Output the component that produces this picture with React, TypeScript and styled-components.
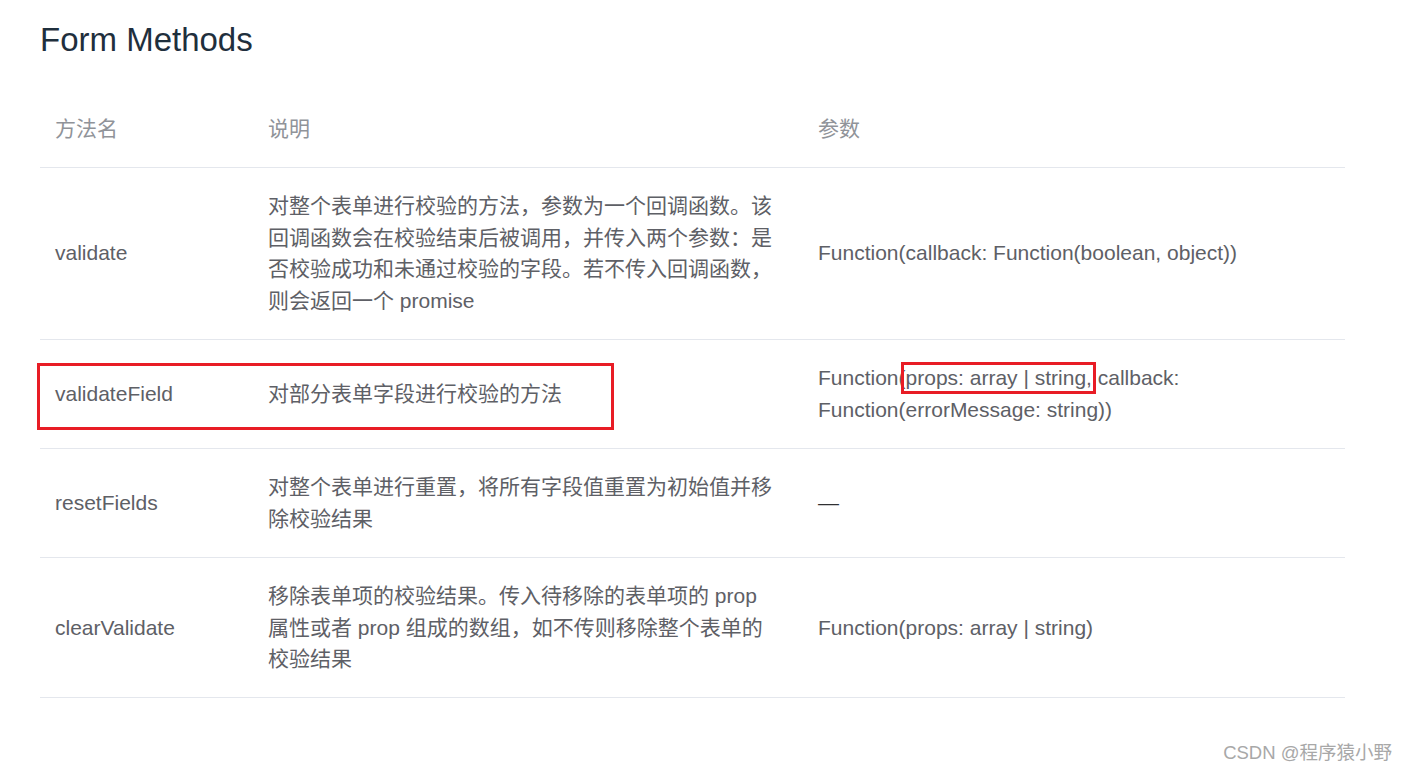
import { FC, ReactElement, ReactNode } from 'react';
import styled, { createGlobalStyle } from 'styled-components';

const GlobalStyle = createGlobalStyle`
    html, body {
        margin: 0;
        padding: 0;
        background: #fff;
    }
    body {
        font-family: "Liberation Sans", Arial, "Noto Sans CJK SC", sans-serif;
    }
`;

const PageWrapper = styled.div`
    position: relative;
    width: 1406px;
    height: 774px;
    padding: 20px 40px 0;
    box-sizing: border-box;
    overflow: hidden;
`;

const Title = styled.h3`
    margin: 0 0 30px;
    font-size: 33px;
    line-height: 40px;
    font-weight: 400;
    color: #1f2f3d;
`;

const Table = styled.table`
    width: 1305px;
    table-layout: fixed;
    border-collapse: collapse;
    font-size: 21px;
    line-height: 31.5px;
`;

const HeadCell = styled.th`
    padding: 22.5px 15px;
    text-align: left;
    font-weight: 400;
    color: #909399;
    border-bottom: 1px solid #e4e7ed;
`;

const Cell = styled.td<{ $dark?: boolean; $narrow?: boolean }>`
    position: relative;
    padding: 22.5px ${(p) => (p.$narrow ? '26px' : '15px')} 22.5px 15px;
    vertical-align: middle;
    color: ${(p) => (p.$dark ? '#303133' : '#5e6066')};
    border-bottom: 1px solid #e4e7ed;
`;

// red annotation boxes drawn over the screenshot
const RowMark = styled.span`
    position: absolute;
    left: -3px;
    top: 23px;
    width: 577px;
    height: 67px;
    border: 3px solid #e81c25;
    box-sizing: border-box;
    pointer-events: none;
`;

const TextMark = styled.span`
    position: relative;

    &::after {
        content: '';
        position: absolute;
        left: -5px;
        right: -4px;
        top: -4px;
        bottom: -5px;
        border: 3px solid #e81c25;
        pointer-events: none;
    }
`;

const Watermark = styled.div`
    position: absolute;
    right: 14px;
    bottom: 8px;
    font-size: 18.5px;
    line-height: 26px;
    color: #a8a8a8;
`;

interface IRow {
    name: string;
    desc: ReactNode;
    params: ReactNode;
    marked?: boolean;
    dark?: boolean;
}

const rows: IRow[] = [
    {
        name: 'validate',
        desc: '对整个表单进行校验的方法，参数为一个回调函数。该回调函数会在校验结束后被调用，并传入两个参数：是否校验成功和未通过校验的字段。若不传入回调函数，则会返回一个 promise',
        params: 'Function(callback: Function(boolean, object))',
    },
    {
        name: 'validateField',
        desc: '对部分表单字段进行校验的方法',
        params: (
            <>
                Function(<TextMark>props: array | string,</TextMark> callback: Function(errorMessage: string))
            </>
        ),
        marked: true,
    },
    {
        name: 'resetFields',
        desc: '对整个表单进行重置，将所有字段值重置为初始值并移除校验结果',
        params: '—',
        dark: true,
    },
    {
        name: 'clearValidate',
        desc: '移除表单项的校验结果。传入待移除的表单项的 prop 属性或者 prop 组成的数组，如不传则移除整个表单的校验结果',
        params: 'Function(props: array | string)',
    },
];

const App: FC = (): ReactElement => {
    return (
        <PageWrapper>
            <GlobalStyle />
            <Title>Form Methods</Title>
            <Table>
                <colgroup>
                    <col style={{ width: 213 }} />
                    <col style={{ width: 550 }} />
                    <col style={{ width: 542 }} />
                </colgroup>
                <thead>
                    <tr>
                        <HeadCell>方法名</HeadCell>
                        <HeadCell>说明</HeadCell>
                        <HeadCell>参数</HeadCell>
                    </tr>
                </thead>
                <tbody>
                    {rows.map((row) => (
                        <tr key={row.name}>
                            <Cell>
                                {row.marked && <RowMark />}
                                {row.name}
                            </Cell>
                            <Cell $narrow>{row.desc}</Cell>
                            <Cell $dark={row.dark}>{row.params}</Cell>
                        </tr>
                    ))}
                </tbody>
            </Table>
            <Watermark>CSDN @程序猿小野</Watermark>
        </PageWrapper>
    );
};

export default App;
